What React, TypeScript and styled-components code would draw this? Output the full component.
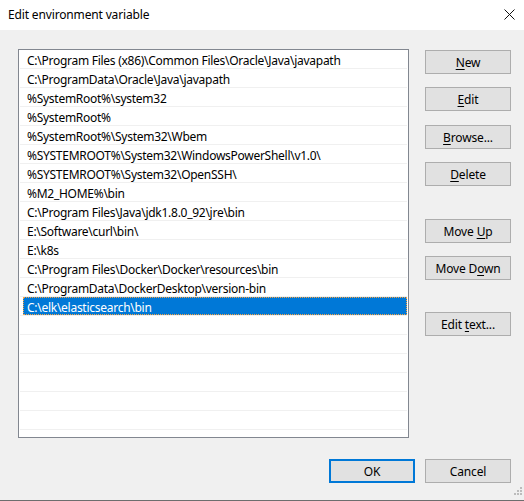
import styled, { createGlobalStyle } from "styled-components";

const GlobalStyle = createGlobalStyle`
    html, body {
        margin: 0;
        padding: 0;
        background: #f0f0f0;
    }
    body {
        font-family: "Noto Sans", "Open Sans", "Liberation Sans", sans-serif;
        font-size: 12px;
        color: #000;
    }
`;

const Window = styled.div`
    position: relative;
    width: 524px;
    height: 501px;
    box-sizing: border-box;
    background: #f0f0f0;
    border-bottom: 1px solid #6d6d6d;
    display: flex;
    flex-direction: column;
`;

const TitleBar = styled.div`
    height: 30px;
    background: #fff;
    display: flex;
    align-items: center;
    justify-content: space-between;
    padding: 0 9px 2px 8px;
    box-sizing: border-box;
`;

const Title = styled.span`
    font-size: 12px;
    letter-spacing: -0.15px;
`;

const Body = styled.div`
    display: flex;
    gap: 16px;
    padding: 19px 13px 0 18px;
`;

const ListBox = styled.ul`
    width: 391px;
    height: 389px;
    box-sizing: border-box;
    margin: 0;
    padding: 0 1px;
    list-style: none;
    background: #fff;
    border: 1px solid #828790;
    overflow: hidden;
`;

const Row = styled.li`
    height: 19px;
    box-sizing: border-box;
    border-bottom: 1px solid #f0f0f0;
    display: flex;
`;

const Label = styled.span<{ $selected?: boolean }>`
    flex: 1;
    margin-left: 3px;
    padding: 2px 0 0 4px;
    display: flex;
    align-items: center;
    white-space: nowrap;
    letter-spacing: -0.27px;
    background: ${(p) => (p.$selected ? "#0078d7" : "transparent")};
    color: ${(p) => (p.$selected ? "#fff" : "#000")};
    outline: ${(p) => (p.$selected ? "1px dotted #f6a343" : "none")};
    outline-offset: -1px;
`;

const Side = styled.div`
    display: flex;
    flex-direction: column;
    padding-top: 1px;
`;

const Button = styled.button<{ $gap?: number; $default?: boolean }>`
    width: 86px;
    height: 24px;
    margin-top: ${(p) => p.$gap ?? 0}px;
    box-sizing: border-box;
    background: #e1e1e1;
    border: ${(p) => (p.$default ? "2px solid #0078d7" : "1px solid #adadad")};
    font-family: inherit;
    font-size: 12px;
    color: #000;
    padding: 1px 0 0;
    letter-spacing: -0.15px;
    u {
        text-underline-offset: 2px;
    }
`;

const Footer = styled.div`
    display: flex;
    justify-content: flex-end;
    gap: 10px;
    padding: 21px 13px 0 0;
`;

const Grip = styled.svg`
    position: absolute;
    right: 2px;
    bottom: 4px;
`;

const paths = [
    "C:\\Program Files (x86)\\Common Files\\Oracle\\Java\\javapath",
    "C:\\ProgramData\\Oracle\\Java\\javapath",
    "%SystemRoot%\\system32",
    "%SystemRoot%",
    "%SystemRoot%\\System32\\Wbem",
    "%SYSTEMROOT%\\System32\\WindowsPowerShell\\v1.0\\",
    "%SYSTEMROOT%\\System32\\OpenSSH\\",
    "%M2_HOME%\\bin",
    "C:\\Program Files\\Java\\jdk1.8.0_92\\jre\\bin",
    "E:\\Software\\curl\\bin\\",
    "E:\\k8s",
    "C:\\Program Files\\Docker\\Docker\\resources\\bin",
    "C:\\ProgramData\\DockerDesktop\\version-bin",
    "C:\\elk\\elasticsearch\\bin",
];

const rows = [...paths, ...Array(7).fill("")];

function App() {
    return (
        <Window>
            <GlobalStyle />
            <TitleBar>
                <Title>Edit environment variable</Title>
                <svg width="11" height="11" viewBox="0 0 11 11">
                    <path d="M0.5 0.5 L10.5 10.5 M10.5 0.5 L0.5 10.5" stroke="#111" strokeWidth="1" />
                </svg>
            </TitleBar>
            <Body>
                <ListBox>
                    {rows.map((p, i) => (
                        <Row key={i}>
                            <Label $selected={i === 13}>{p}</Label>
                        </Row>
                    ))}
                </ListBox>
                <Side>
                    <Button><u>N</u>ew</Button>
                    <Button $gap={13}><u>E</u>dit</Button>
                    <Button $gap={14}><u>B</u>rowse...</Button>
                    <Button $gap={13}><u>D</u>elete</Button>
                    <Button $gap={33}>Move <u>U</u>p</Button>
                    <Button $gap={13}>Move D<u>o</u>wn</Button>
                    <Button $gap={32}>Edit <u>t</u>ext...</Button>
                </Side>
            </Body>
            <Footer>
                <Button $default>OK</Button>
                <Button>Cancel</Button>
            </Footer>
            <Grip width="10" height="10" viewBox="0 0 10 10">
                {[
                    [8, 0], [5, 3], [8, 3], [2, 6], [5, 6], [8, 6],
                ].map(([x, y], i) => (
                    <rect key={i} x={x} y={y + 1} width="2" height="2" fill="#bcbcbc" />
                ))}
            </Grip>
        </Window>
    );
}

export default App;
